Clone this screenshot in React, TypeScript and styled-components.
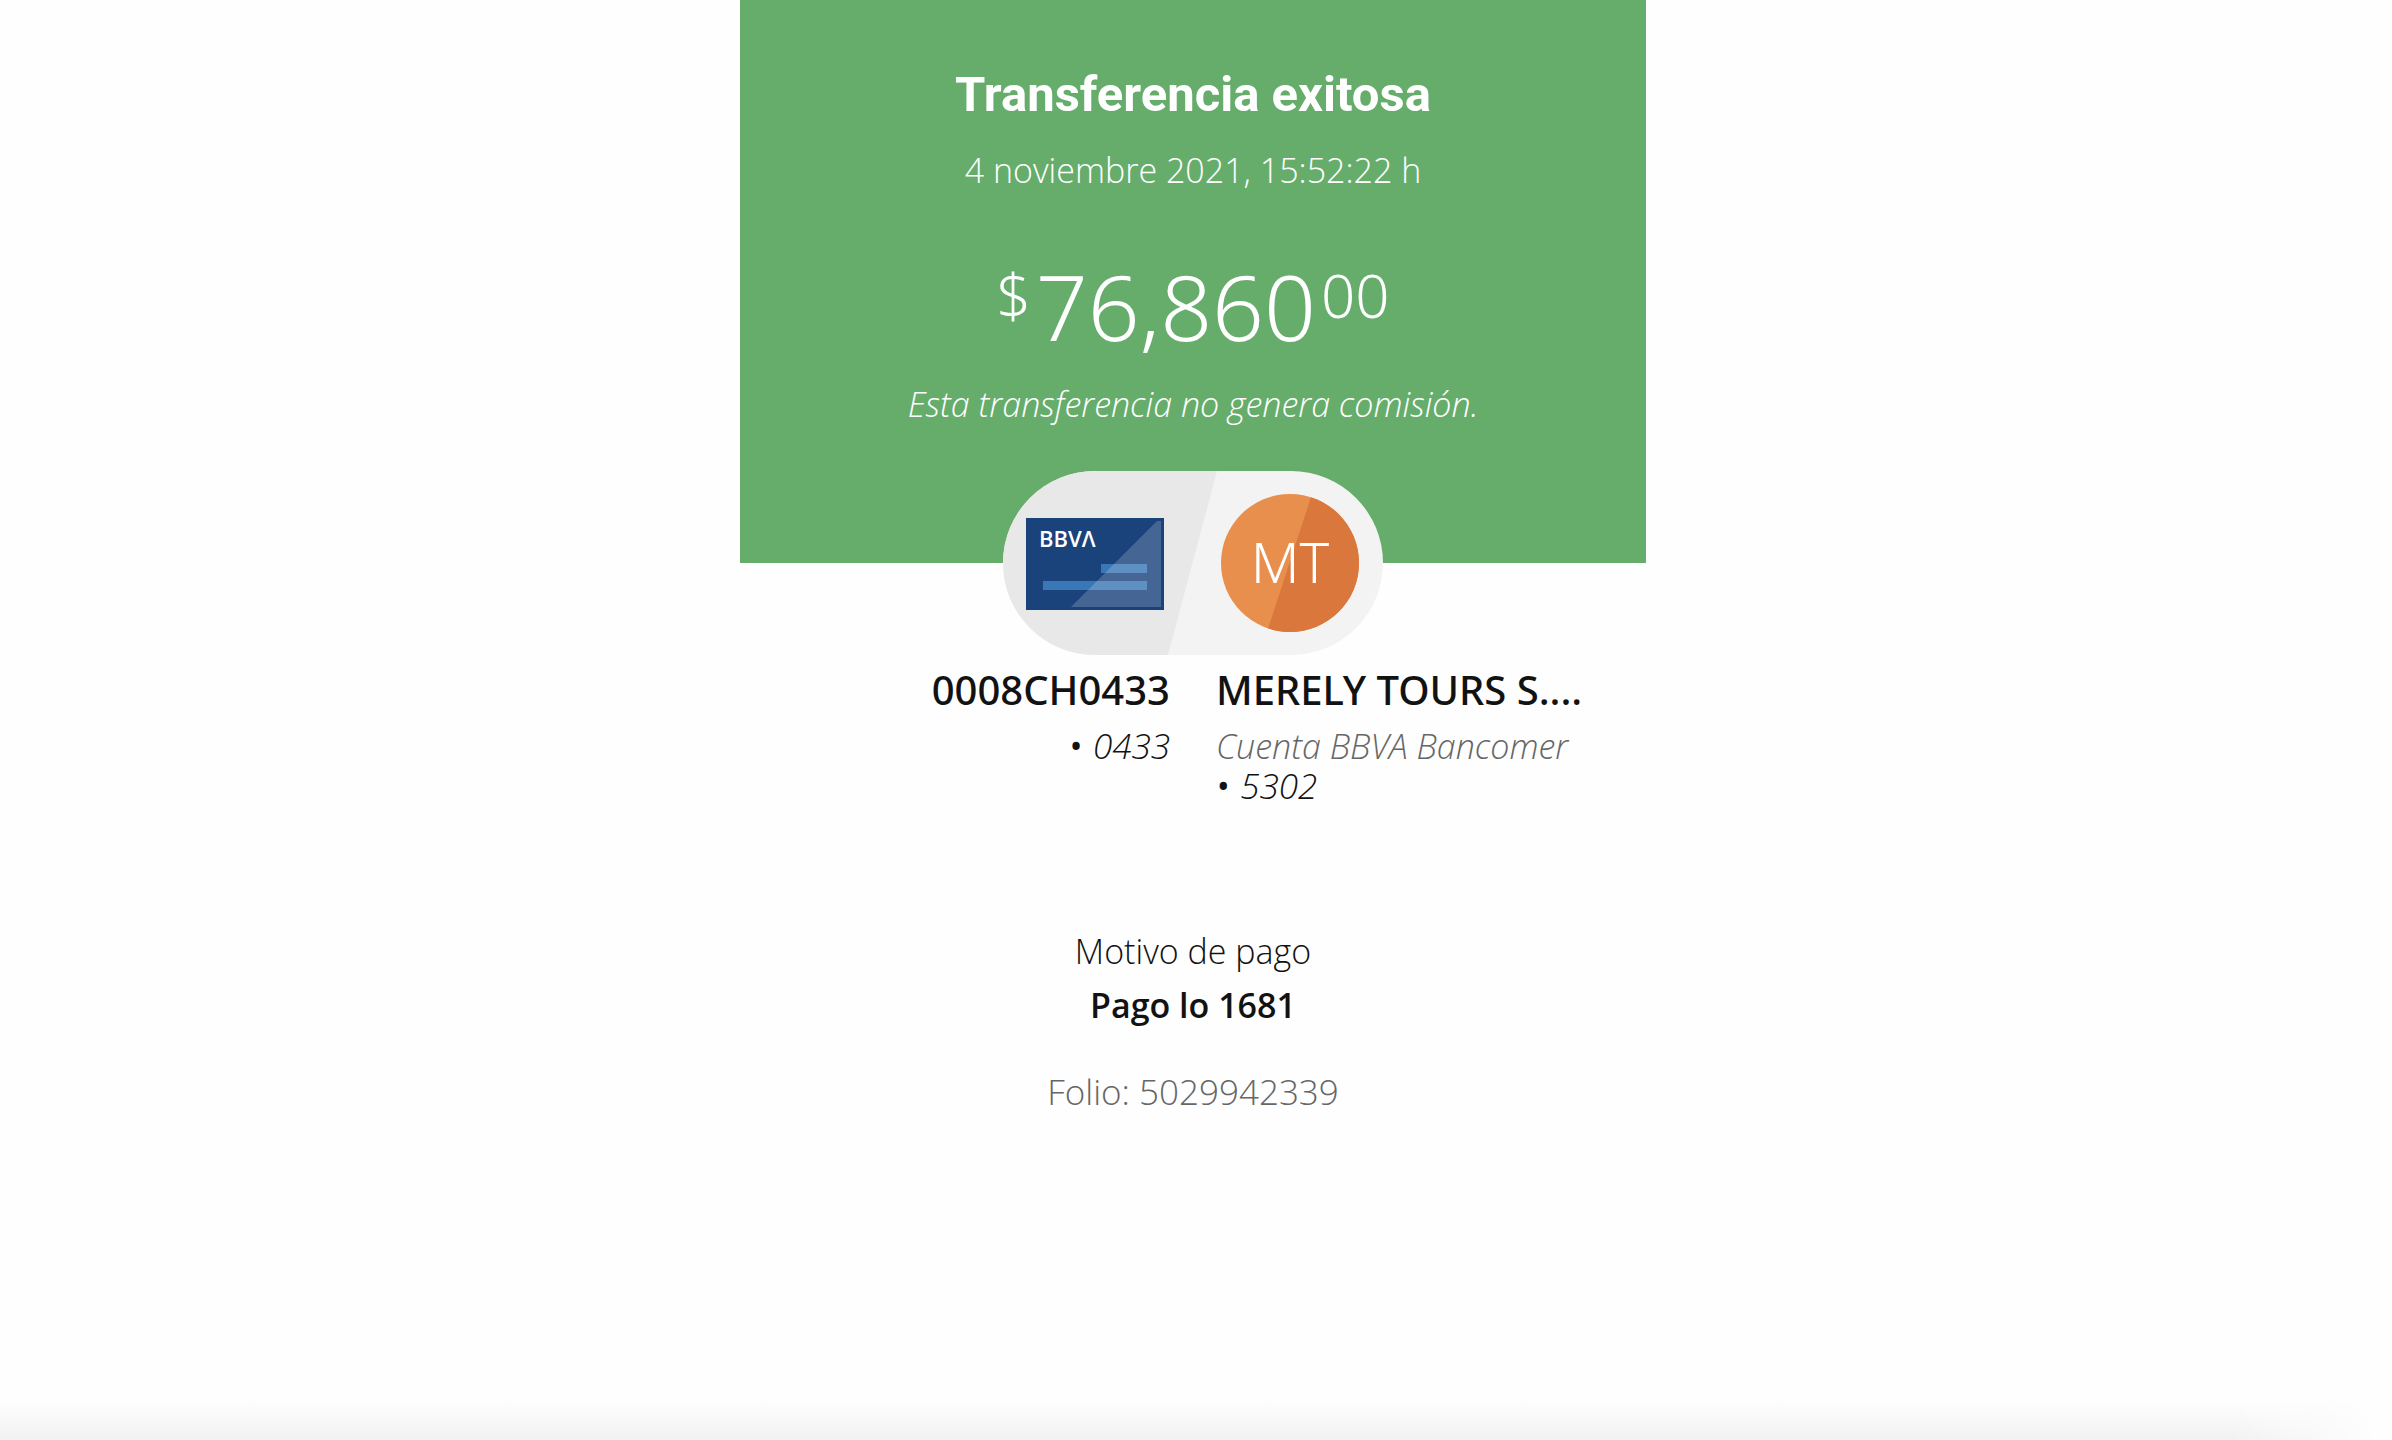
import React from "react";
import styled, { createGlobalStyle } from "styled-components";

const GlobalStyle = createGlobalStyle`
  *, *::before, *::after { box-sizing: border-box; }
  body {
    margin: 0;
    background: #fefefe;
    color: #121212;
    font-family: "Open Sans", "Noto Sans", sans-serif;
  }
  h1, h2, p { margin: 0; }
`;

const Page = styled.div`
  min-height: 100vh;
  display: flex;
  flex-direction: column;
  align-items: center;
`;

const Receipt = styled.main`
  width: 100%;
  max-width: 912px;
  padding-right: 6px;
  display: flex;
  flex-direction: column;
`;

const Hero = styled.header`
  display: flex;
  flex-direction: column;
  align-items: center;
  padding: 65px 24px 139px;
  background: #66ad6c;
  color: #fff;
  text-align: center;
`;

const Title = styled.h1`
  font-family: Roboto, "Open Sans", sans-serif;
  font-size: 49px;
  line-height: 60px;
  font-weight: 700;
`;

const Line = styled.p<{
  $italic?: boolean;
  $tone?: string;
  $weight?: number;
  $numeric?: boolean;
}>`
  font-size: ${(p) => (p.$numeric ? 35 : 34)}px;
  line-height: 40px;
  font-weight: ${(p) => p.$weight ?? 300};
  font-style: ${(p) => (p.$italic ? "italic" : "normal")};
  color: ${(p) => p.$tone ?? "inherit"};
`;

const DateLine = styled(Line)`
  margin-top: 25px;
`;

const Amount = styled.p`
  display: flex;
  align-items: flex-start;
  gap: 5px;
  margin: 66px 0 28px;
  font-family: "Noto Sans", "Open Sans", sans-serif;
  font-size: 91px;
  line-height: 100px;
  font-weight: 300;
`;

const Small = styled.span`
  font-size: 60px;
  line-height: 78px;
`;

const Parties = styled.svg`
  display: block;
  width: 380px;
  height: 184px;
  margin: -92px auto 0;
`;

const Initials = styled.text`
  font-family: "Noto Sans", "Open Sans", sans-serif;
  font-size: 56px;
  font-weight: 300;
  text-anchor: middle;
  fill: #fff;
`;

const CardBrand = styled.text`
  font-size: 22px;
  font-weight: 600;
  fill: #fff;
`;

const Accounts = styled.section`
  display: grid;
  grid-template-columns: 1fr 1fr;
  gap: 46px;
  padding-top: 11px;
  white-space: nowrap;
`;

const Account = styled.div<{ $end?: boolean }>`
  text-align: ${(p) => (p.$end ? "right" : "left")};
`;

const AccountName = styled.h2`
  margin-bottom: 12px;
  font-family: "Noto Sans", "Open Sans", sans-serif;
  font-size: 40px;
  line-height: 48px;
  font-weight: 500;
`;

const Bullet = styled.span`
  margin-right: 2px;
  font-weight: 400;
`;

const Details = styled.section`
  display: flex;
  flex-direction: column;
  align-items: center;
  gap: 14px;
  padding-top: 125px;
`;

const Folio = styled(Line)`
  margin-top: 33px;
`;

const BottomShade = styled.footer`
  align-self: stretch;
  height: 40px;
  margin-top: auto;
  background: linear-gradient(to bottom, #fefefe, #f1f1f1);
  mask-image: linear-gradient(to left, transparent 16px, #000 160px);
`;

function PartiesBadge() {
  return (
    <Parties viewBox="0 0 380 184" role="img" aria-label="De tarjeta BBVA a MT">
      <defs>
        <clipPath id="pill">
          <rect width="380" height="184" rx="92" />
        </clipPath>
        <clipPath id="avatar">
          <circle cx="287" cy="92" r="69" />
        </clipPath>
      </defs>
      <g clipPath="url(#pill)">
        <rect width="380" height="184" fill="#f3f3f3" />
        <path d="M0 0H214L165 184H0Z" fill="#e8e8e8" />
      </g>
      <rect x="23" y="47" width="138" height="92" fill="#1a437c" />
      <rect x="98" y="93" width="46" height="9" fill="#3a77b7" />
      <rect x="40" y="110" width="104" height="9" fill="#3a77b7" />
      <path d="M158 50V136H68L154 50Z" fill="#fff" fillOpacity="0.19" />
      <CardBrand x="36" y="76">
        BBVΛ
      </CardBrand>
      <g clipPath="url(#avatar)">
        <rect x="218" y="23" width="138" height="138" fill="#e88f4d" />
        <path d="M310 20H360V164H263Z" fill="#da773d" />
      </g>
      <Initials x="287" y="112">
        MT
      </Initials>
    </Parties>
  );
}

export default function App() {
  return (
    <>
      <GlobalStyle />
      <Page>
        <Receipt>
          <Hero>
            <Title>Transferencia exitosa</Title>
            <DateLine>4 noviembre 2021, 15:52:22 h</DateLine>
            <Amount>
              <Small>$</Small>
              <span>76,860</span>
              <Small>00</Small>
            </Amount>
            <Line $italic>Esta transferencia no genera comisión.</Line>
          </Hero>
          <PartiesBadge />
          <Accounts>
            <Account $end>
              <AccountName>0008CH0433</AccountName>
              <Line $italic $numeric>
                <Bullet>•</Bullet> 0433
              </Line>
            </Account>
            <Account>
              <AccountName>MERELY TOURS S....</AccountName>
              <Line $italic $tone="#666">
                Cuenta BBVA Bancomer
              </Line>
              <Line $italic $numeric>
                <Bullet>•</Bullet> 5302
              </Line>
            </Account>
          </Accounts>
          <Details>
            <Line>Motivo de pago</Line>
            <Line $weight={600}>Pago lo 1681</Line>
            <Folio $numeric $tone="#666">
              Folio: 5029942339
            </Folio>
          </Details>
        </Receipt>
        <BottomShade />
      </Page>
    </>
  );
}
